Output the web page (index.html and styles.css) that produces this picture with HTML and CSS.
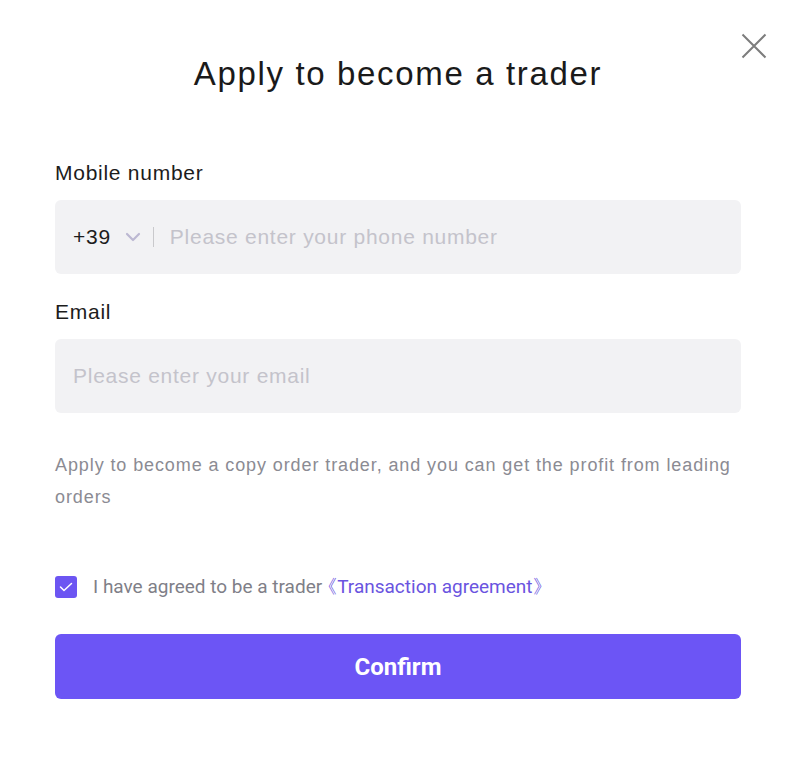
FILE: index.html
```html
<!DOCTYPE html>
<html lang="en">
<head>
    <meta charset="UTF-8">
    <meta name="viewport" content="width=device-width, initial-scale=1.0">
    <title>Apply to become a trader</title>
    <link rel="stylesheet" href="styles.css">
</head>
<body>
    <div class="dialog">
        <button class="close" type="button" aria-label="Close">
            <svg width="26" height="26" viewBox="0 0 26 26">
                <path d="M1.5 1.5 L24.5 24.5 M24.5 1.5 L1.5 24.5" stroke="#7d7d7d" stroke-width="2" fill="none"/>
            </svg>
        </button>

        <h2 class="title">Apply to become a trader</h2>

        <form class="apply-form">
            <div class="form-group">
                <label for="phone">Mobile number</label>
                <div class="field">
                    <span class="prefix">+39</span>
                    <svg class="chevron" width="16" height="10" viewBox="0 0 16 10">
                        <path d="M2 2 L8 8 L14 2" stroke="#bcb8d2" stroke-width="2.2" fill="none" stroke-linecap="round" stroke-linejoin="round"/>
                    </svg>
                    <span class="divider"></span>
                    <input type="tel" id="phone" placeholder="Please enter your phone number">
                </div>
            </div>
            <div class="form-group">
                <label for="email">Email</label>
                <div class="field">
                    <input type="email" id="email" placeholder="Please enter your email">
                </div>
            </div>

            <p class="hint">Apply to become a copy order trader, and you can get the profit from leading orders</p>

            <label class="agree">
                <span class="check">
                    <svg width="14" height="10" viewBox="0 0 14 10">
                        <path d="M1.5 5 L5 8.5 L12.5 1.5" stroke="#fff" stroke-width="1.5" fill="none" stroke-linecap="round" stroke-linejoin="round"/>
                    </svg>
                </span>
                <span class="agree-text">I have agreed to be a trader</span>
                <a href="#" class="agree-link">《Transaction agreement》</a>
            </label>

            <button type="submit" class="confirm">Confirm</button>
        </form>
    </div>
</body>
</html>
```

FILE: styles.css
```css
body {
    margin: 0;
    background-color: #ffffff;
    font-family: 'Liberation Sans', Arial, sans-serif;
}
.dialog {
    position: relative;
    padding: 54px 59px 0 55px;
}
.close {
    position: absolute;
    top: 33px;
    right: 33px;
    padding: 0;
    border: none;
    background: transparent;
    cursor: pointer;
}
.close svg {
    display: block;
}
.title {
    margin: 0;
    text-align: center;
    font-size: 33px;
    line-height: 40px;
    font-weight: 400;
    color: #1a1a1a;
    letter-spacing: 0.05em;
}
.apply-form {
    margin-top: 65px;
}
.form-group {
    margin-bottom: 24px;
}
.form-group label {
    display: block;
    font-size: 21px;
    line-height: 28px;
    color: #1c1c1c;
    letter-spacing: 0.035em;
    margin-bottom: 13px;
}
.field {
    display: flex;
    align-items: center;
    height: 74px;
    padding: 0 18px;
    background-color: #f2f2f4;
    border-radius: 6px;
    box-sizing: border-box;
}
.prefix {
    font-size: 21px;
    color: #1c1c1c;
    letter-spacing: 0.035em;
}
.chevron {
    margin-left: 14px;
}
.divider {
    width: 1px;
    height: 20px;
    background-color: #c9c9cc;
    margin: 0 16px 0 12px;
}
.field input {
    flex: 1;
    border: none;
    outline: none;
    background: transparent;
    padding: 0;
    font-family: inherit;
    font-size: 21px;
    letter-spacing: 0.035em;
    color: #1c1c1c;
}
.field input::placeholder {
    color: #c4c3cb;
}
.hint {
    margin: 36px 0 0;
    font-size: 18px;
    line-height: 32px;
    letter-spacing: 0.05em;
    color: #8b8b93;
}
.agree {
    display: flex;
    align-items: center;
    height: 22px;
    line-height: 22px;
    margin-top: 63px;
    font-family: Roboto, sans-serif;
    font-size: 19px;
    cursor: pointer;
}
.check {
    display: flex;
    align-items: center;
    justify-content: center;
    width: 22px;
    height: 22px;
    border-radius: 3px;
    background-color: #6c55f2;
    margin-right: 16px;
}
.agree-text {
    color: #7f7f88;
}
.agree-link {
    color: #6a54e0;
    text-decoration: none;
    margin-left: -4px;
}
.confirm {
    display: block;
    width: 100%;
    height: 65px;
    margin-top: 36px;
    border: none;
    border-radius: 6px;
    background-color: #6c55f5;
    color: #ffffff;
    font-family: Roboto, sans-serif;
    font-size: 24px;
    font-weight: 700;
    cursor: pointer;
}
```
